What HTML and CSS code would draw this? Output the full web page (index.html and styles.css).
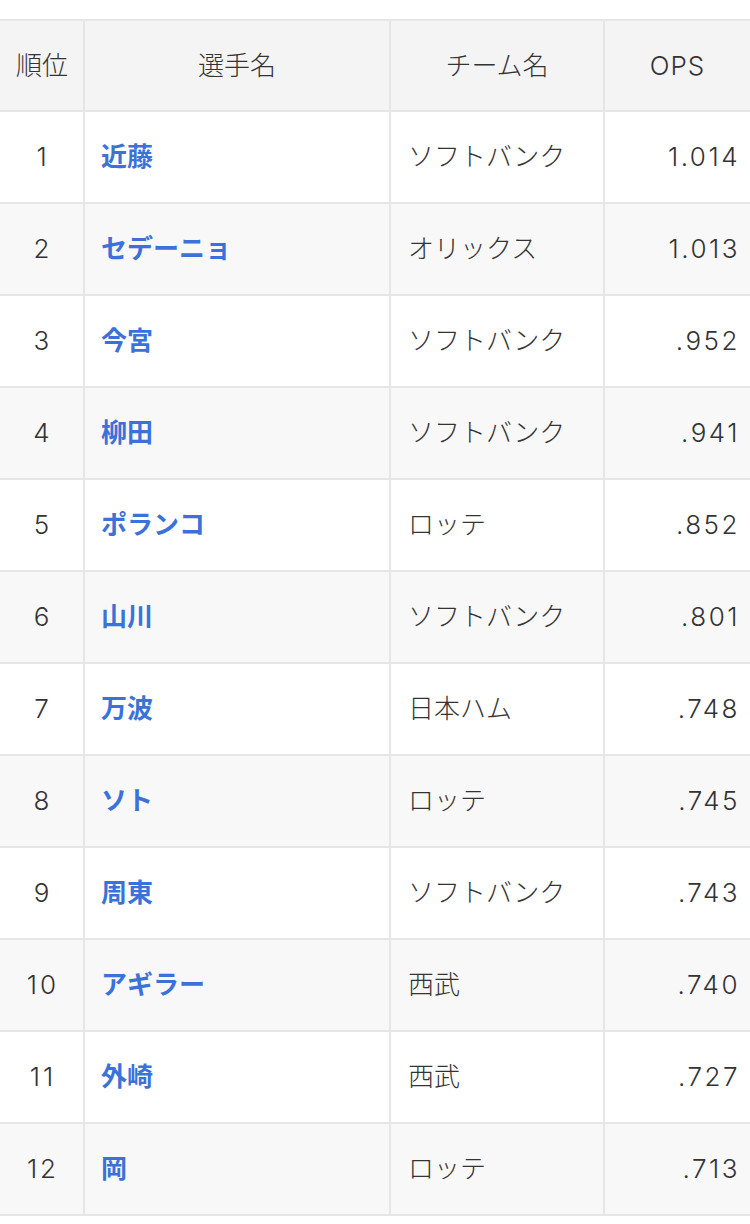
FILE: index.html
```html
<!DOCTYPE html>
<html lang="ja">
<head>
<meta charset="utf-8">
<title>OPS ランキング</title>
<link rel="stylesheet" href="styles.css">
</head>
<body>
<div class="wrap">
<table class="rank">
<colgroup>
<col class="c-rank"><col class="c-name"><col class="c-team"><col class="c-ops">
</colgroup>
<thead>
<tr><th>順位</th><th>選手名</th><th>チーム名</th><th class="h-ops">OPS</th></tr>
</thead>
<tbody>
<tr><td class="r">1</td><td class="n"><a href="#">近藤</a></td><td class="t">ソフトバンク</td><td class="o">1.014</td></tr>
<tr><td class="r">2</td><td class="n"><a href="#">セデーニョ</a></td><td class="t">オリックス</td><td class="o">1.013</td></tr>
<tr><td class="r">3</td><td class="n"><a href="#">今宮</a></td><td class="t">ソフトバンク</td><td class="o">.952</td></tr>
<tr><td class="r">4</td><td class="n"><a href="#">柳田</a></td><td class="t">ソフトバンク</td><td class="o">.941</td></tr>
<tr><td class="r">5</td><td class="n"><a href="#">ポランコ</a></td><td class="t">ロッテ</td><td class="o">.852</td></tr>
<tr><td class="r">6</td><td class="n"><a href="#">山川</a></td><td class="t">ソフトバンク</td><td class="o">.801</td></tr>
<tr><td class="r">7</td><td class="n"><a href="#">万波</a></td><td class="t">日本ハム</td><td class="o">.748</td></tr>
<tr><td class="r">8</td><td class="n"><a href="#">ソト</a></td><td class="t">ロッテ</td><td class="o">.745</td></tr>
<tr><td class="r">9</td><td class="n"><a href="#">周東</a></td><td class="t">ソフトバンク</td><td class="o">.743</td></tr>
<tr><td class="r">10</td><td class="n"><a href="#">アギラー</a></td><td class="t">西武</td><td class="o">.740</td></tr>
<tr><td class="r">11</td><td class="n"><a href="#">外崎</a></td><td class="t">西武</td><td class="o">.727</td></tr>
<tr><td class="r">12</td><td class="n"><a href="#">岡</a></td><td class="t">ロッテ</td><td class="o">.713</td></tr>
</tbody>
</table>
</div>
</body>
</html>
```
FILE: styles.css
```css
html, body {
  margin: 0;
  padding: 0;
  background: #ffffff;
}
body {
  font-family: Inter, "Noto Sans CJK JP", "Noto Sans", sans-serif;
  color: #333333;
}
.wrap {
  padding-top: 19px;
  overflow: hidden;
}
.rank {
  width: 750px;
  table-layout: fixed;
  border-collapse: separate;
  border-spacing: 0;
  border-top: 2px solid #e6e6e6;
  font-size: 26px;
}
.c-rank { width: 85px; }
.c-name { width: 306px; }
.c-team { width: 214px; }
.c-ops { width: 145px; }
.rank th,
.rank td {
  box-sizing: border-box;
  height: 92px;
  padding: 0 16px;
  border-right: 2px solid #e6e6e6;
  border-bottom: 2px solid #e6e6e6;
  vertical-align: middle;
  white-space: nowrap;
  line-height: 1.2;
  font-weight: 300;
}
.rank th:last-child,
.rank td:last-child {
  border-right: none;
}
.rank th {
  height: 91px;
  background: #f4f4f4;
  text-align: center;
  color: #333333;
}
.rank th.h-ops {
  letter-spacing: 1px;
}
.rank tbody tr:nth-child(even) td {
  background: #f8f8f8;
}
.rank td.r {
  text-align: center;
  padding: 0 0 0 3px;
  letter-spacing: 3px;
}
.rank td.n a {
  color: #3b72d9;
  font-weight: 700;
  text-decoration: none;
}
.rank td.t {
  text-align: left;
  padding-left: 17px;
}
.rank td.o {
  text-align: right;
  padding-right: 10px;
  letter-spacing: 2.5px;
}
```
